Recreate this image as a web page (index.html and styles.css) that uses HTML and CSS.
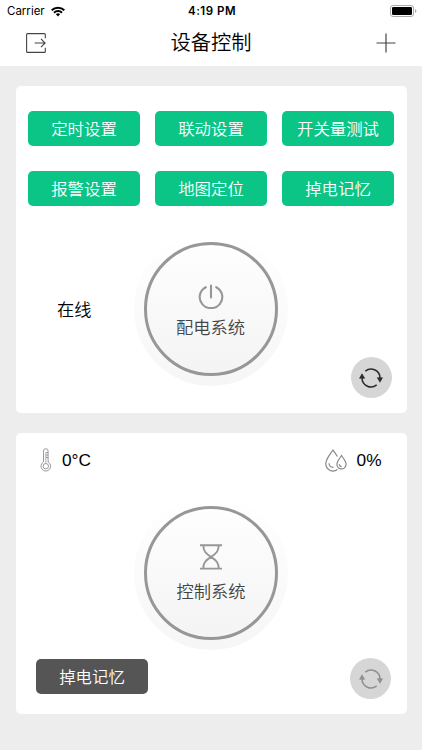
FILE: index.html
```
<!DOCTYPE html>
<html lang="zh-CN">
<head>
<meta charset="UTF-8">
<meta name="viewport" content="width=device-width, initial-scale=1.0">
<title>设备控制</title>
<link rel="stylesheet" href="styles.css">
</head>
<body>
  <header>
    <div class="status">
      <div class="carrier">
        <span>Carrier</span>
        <svg width="14" height="11" viewBox="0 0 14 11" fill="none" stroke="#000" stroke-width="2">
          <path d="M0.7 4.2a9 9 0 0 1 12.6 0M3 6.7a5.7 5.7 0 0 1 8 0"/>
          <path d="M4.9 8.3a3 3 0 0 1 4.2 0L7 10.5z" fill="#000" stroke="none"/>
        </svg>
      </div>
      <span class="time">4:19 PM</span>
      <svg class="battery" width="27" height="12" viewBox="0 0 27 12">
        <rect x="0.5" y="0.5" width="23" height="11" rx="2.5" fill="none" stroke="#aaa"/>
        <rect x="2" y="2" width="20" height="8" rx="1.2"/>
        <path d="M25 4v4q1.4-.6 1.4-2T25 4z" fill="#aaa"/>
      </svg>
    </div>
    <div class="navbar">
      <svg width="20" height="20" viewBox="0 0 20 20" fill="none" stroke="#444" stroke-width="1.1">
        <path d="M19.3 5.2V1.6q0-1-1-1H1.6q-1 0-1 1v16.8q0 1 1 1h16.7q1 0 1-1v-3.6M8.7 10h10.2M15 5.8l4.1 4.2-4.1 4.2"/>
      </svg>
      <h1>设备控制</h1>
      <svg width="20" height="20" viewBox="0 0 20 20" stroke="#444" stroke-width="1.2">
        <path d="M10 0.5v19M0.5 10h19"/>
      </svg>
    </div>
  </header>

  <main>
    <section class="card power">
      <div class="buttons">
        <button class="btn">定时设置</button>
        <button class="btn">联动设置</button>
        <button class="btn">开关量测试</button>
        <button class="btn">报警设置</button>
        <button class="btn">地图定位</button>
        <button class="btn">掉电记忆</button>
      </div>
      <div class="panel">
        <span class="online">在线</span>
        <div class="halo">
          <div class="dial">
            <svg width="26" height="26" viewBox="0 0 26 26" fill="none" stroke="#979797" stroke-width="2.1" stroke-linecap="round">
              <path d="M7.8 4.2a11.3 11.1 0 1 0 10.4 0M13 2.6v11.8"/>
            </svg>
            <span>配电系统</span>
          </div>
        </div>
        <button class="refresh">
          <svg width="24" height="20" viewBox="0 0 24 20" fill="none" stroke="currentColor" stroke-width="1.5">
            <path d="M6.3 3.1A9 9 0 0 1 21 10.5M17.7 16.9A9 9 0 0 1 3 9.5"/>
            <path d="M18.3 9.7h5.2L21 14.2zM0.5 10.3h5.2L3 5.8z" fill="currentColor" stroke="currentColor" stroke-width="0.6"/>
          </svg>
        </button>
      </div>
    </section>

    <section class="card control">
      <div class="sensors">
        <div class="sensor">
          <svg width="12" height="24" viewBox="0 0 12 24" fill="none" stroke="#999" stroke-width="1">
            <path d="M3.5 14V3a2.3 2.3 0 0 1 4.6 0v11a4.8 4.8 0 1 1-4.6 0z"/>
            <path d="M5.8 4.5v11" stroke-width="1.2" stroke="#bbb"/>
            <circle cx="5.8" cy="18.2" r="2.7"/>
            <path d="M6 4.5h2M6 7h2M6 9.5h2"/>
          </svg>
          <span>0°C</span>
        </div>
        <div class="sensor">
          <svg width="22" height="23" viewBox="0 0 22 23" fill="none" stroke="#888" stroke-width="1.2">
            <path d="M12.3 7.5C11 4.8 9.4 2.8 8 1 5.4 4.8.8 9.8.8 14.8a7.3 7.3 0 0 0 11.6 5.8"/>
            <path d="M16.5 6.5c-1.8 2.9-4.6 5.8-4.6 8.8a4.6 4.6 0 0 0 9.2 0c0-3-2.8-5.9-4.6-8.8z"/>
            <path d="M4 14.3c.2 2.7 2 4.2 4.6 4.1M14.3 15.2c.1 1.4 1 2.3 2.4 2.3"/>
          </svg>
          <span>0%</span>
        </div>
      </div>
      <div class="halo">
        <div class="dial">
          <svg width="24" height="26" viewBox="0 0 24 26" fill="none" stroke="#979797" stroke-width="1.9">
            <path d="M1 1.2h22M1 24.6h22M4.3 1.2c0 6 2.5 8.2 7.7 11.7 5.2-3.5 7.7-5.7 7.7-11.7M4.3 24.6c0-6 2.5-8.2 7.7-11.7 5.2 3.5 7.7 5.7 7.7 11.7"/>
          </svg>
          <span>控制系统</span>
        </div>
      </div>
      <div class="actions">
        <button class="btn dark">掉电记忆</button>
        <button class="refresh disabled">
          <svg width="24" height="20" viewBox="0 0 24 20" fill="none" stroke="currentColor" stroke-width="1.5">
            <path d="M6.3 3.1A9 9 0 0 1 21 10.5M17.7 16.9A9 9 0 0 1 3 9.5"/>
            <path d="M18.3 9.7h5.2L21 14.2zM0.5 10.3h5.2L3 5.8z" fill="currentColor" stroke="currentColor" stroke-width="0.6"/>
          </svg>
        </button>
      </div>
    </section>
  </main>
</body>
</html>
```
FILE: styles.css
```
* {
  box-sizing: border-box;
}

body {
  margin: 0;
  height: 750px;
  background-color: #ededed;
  color: #000;
  font-family: Inter, "Noto Sans CJK SC", sans-serif;
}

svg {
  display: block;
}

header {
  height: 65.5px;
  background: #fff;
}

.status {
  display: grid;
  grid-template-columns: 1fr auto 1fr;
  align-items: center;
  height: 22px;
  padding: 0 5px 0 7px;
  font-size: 11.5px;
}

.carrier {
  display: flex;
  align-items: center;
  gap: 6px;
}

.time {
  font-weight: 600;
  letter-spacing: 0.5px;
}

.battery {
  justify-self: end;
}

.navbar {
  display: flex;
  justify-content: space-between;
  align-items: center;
  height: 42px;
  padding: 0 26px;
}

h1 {
  margin: 0;
  font-size: 20.3px;
  line-height: 30px;
  font-weight: 350;
}

main {
  display: flex;
  flex-direction: column;
  gap: 20px;
  padding: 20.5px 15.5px 0;
}

.card {
  background: #fff;
  border-radius: 5px;
}

.power {
  height: 327px;
  padding: 25px 12.5px 15px;
}

.buttons {
  display: grid;
  grid-template-columns: repeat(3, 112px);
  justify-content: space-between;
  row-gap: 25px;
}

.btn {
  width: 112px;
  height: 35px;
  padding: 0 0 2px;
  border: none;
  border-radius: 5px;
  background-color: #0bc587;
  color: #fff;
  font-family: inherit;
  font-size: 16.4px;
  font-weight: 350;
}

.dark {
  background-color: #555;
}

.panel {
  display: grid;
  grid-template-columns: 1fr 154px 1fr;
  height: 166px;
  margin: 26px 2.5px 0 1.5px;
}

.online {
  padding: 65px 0 0 27.5px;
  font-size: 17.2px;
  font-weight: 350;
  line-height: 26px;
}

.halo {
  display: flex;
  align-items: center;
  justify-content: center;
  width: 154px;
  height: 154px;
  border-radius: 50%;
  background: linear-gradient(#fff, #f6f6f6);
}

.dial {
  display: flex;
  flex-direction: column;
  align-items: center;
  width: 134px;
  height: 134px;
  padding-top: 38px;
  border: 3.3px solid #979797;
  border-radius: 50%;
  background: linear-gradient(#fefefe, #f4f4f4);
  color: #444;
  font-size: 17.3px;
  font-weight: 350;
  line-height: 26px;
}

.dial span {
  margin-top: 6px;
}

.refresh {
  display: flex;
  align-items: center;
  justify-content: center;
  align-self: end;
  justify-self: end;
  width: 41px;
  height: 41px;
  padding: 0;
  border: none;
  border-radius: 50%;
  background-color: #d6d6d6;
  color: #2b2b2b;
}

.disabled {
  color: #909090;
}

.control {
  height: 281px;
  padding: 14px 15.5px 15px 20.5px;
}

.sensors {
  display: flex;
  justify-content: space-between;
  height: 26px;
  padding: 0 9.5px 0 4px;
  font-family: "Liberation Sans", Arial, sans-serif;
  font-size: 17.3px;
}

.sensor {
  display: flex;
  align-items: center;
  gap: 10px;
}

.control .halo {
  margin: 23px 0 8px 98px;
}

.control .dial {
  padding-top: 35px;
}

.control .dial span {
  margin-top: 9px;
}

.actions {
  display: flex;
  justify-content: space-between;
  align-items: flex-start;
  padding-top: 1px;
}

.actions .refresh {
  margin-top: -1px;
}
```
